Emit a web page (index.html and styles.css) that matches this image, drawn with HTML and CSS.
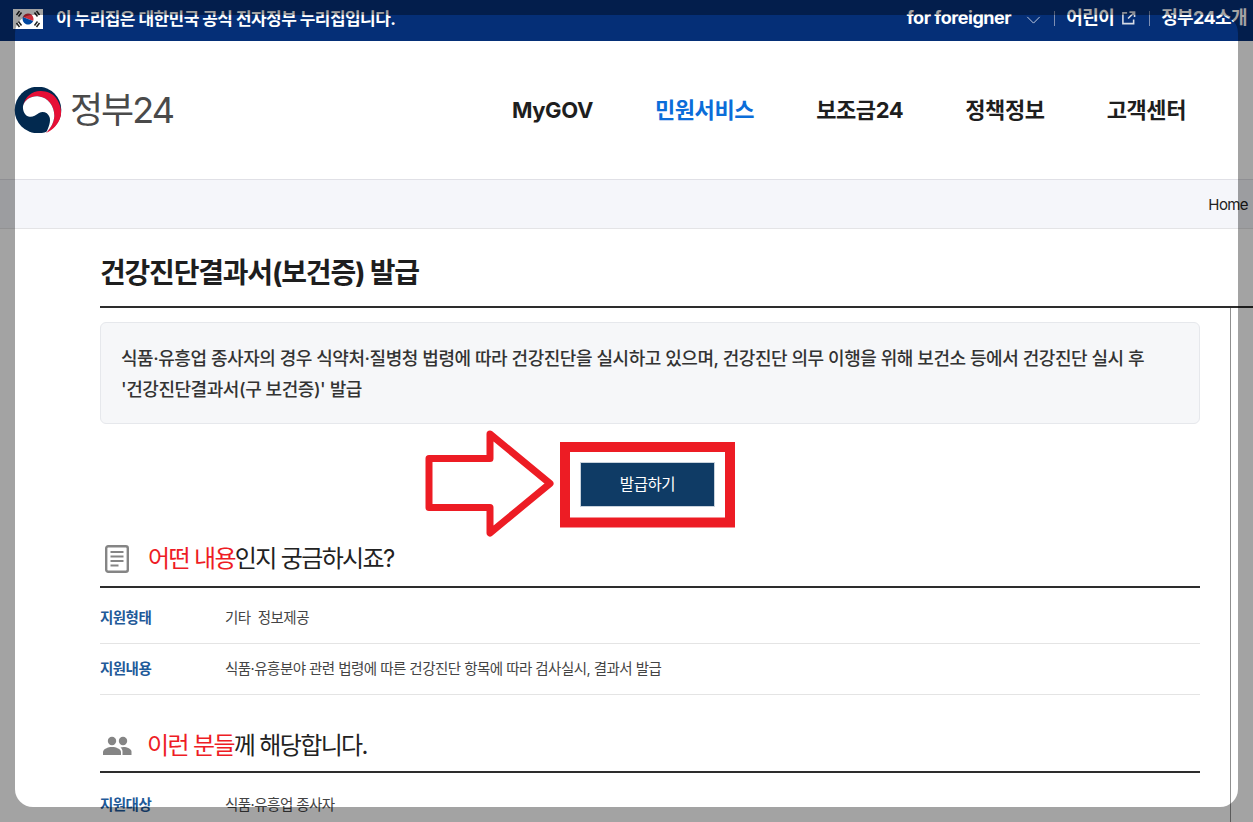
FILE: index.html
```html
<!DOCTYPE html>
<html lang="ko">
<head>
<meta charset="utf-8">
<title>건강진단결과서(보건증) 발급</title>
<link rel="stylesheet" href="styles.css">
</head>
<body>
<div class="page">
  <div class="topbar">
    <div class="gov-note">
      <svg class="flag" viewBox="0 0 30 20" width="30" height="20" aria-hidden="true">
        <rect width="30" height="20" fill="#fff"/>
        <g transform="rotate(20 15 10)">
          <path d="M9.500 10a5.500 5.500 0 0 1 11 0z" fill="#cd2e3a"/>
          <path d="M9.500 10a5.500 5.500 0 0 0 11 0z" fill="#0047a0"/>
        </g>
        <g stroke="#222" stroke-width="1.500">
          <path d="M3.500 6l3-4M5.500 7.500l3-4M21.500 3.500l3 4M23.500 2l3 4M3.500 14l3 4M5.500 12.500l3 4M21.500 16.500l3-4M23.500 18l3-4"/>
        </g>
      </svg>
      <span>이 누리집은 대한민국 공식 전자정부 누리집입니다.</span>
    </div>
    <div class="util">
      <span class="foreigner">for foreigner</span>
      <svg class="chev" viewBox="0 0 16 9" width="15" height="8" aria-hidden="true"><path d="M1 1l7 7 7-7" fill="none" stroke="#d5dcea" stroke-width="1"/></svg>
      <i class="sep"></i>
      <span>어린이</span>
      <svg class="ext" viewBox="0 0 15 15" width="15" height="14" aria-hidden="true"><path d="M6 2H1.500v11.500H13V9M8.500 1.200H14v5.300M14 1.200L7 8" fill="none" stroke="#d6dbe6" stroke-width="1.700"/></svg>
      <i class="sep"></i>
      <span>정부24소개</span>
    </div>
  </div>

  <header class="header">
    <a class="logo">
      <svg viewBox="0 0 48 46" width="48" height="46" aria-hidden="true">
        <circle cx="24" cy="23" r="23.300" fill="#02294f"/>
        <path d="M9 19C11 9 19 3.500 27 4C33 4.500 38 6 42 11C47 18 48 25 46.500 30C44.500 37 39 43 32 46C37 41 40 35 40.300 29C40.500 19 34 10.500 25 9.500C18 8.500 11 12 9 19z" fill="#e60f36"/>
        <path d="M9 19C11 12 18 8.500 25 9.500C34 10.500 40.500 19 40.300 29C40 35 37 41 32 46C35 40 37 34 35.500 30C34 25.500 29 23.500 25 26C21 29 18 30.500 14.500 29.500C11 28.500 8.500 24 9 19z" fill="#fff"/>
      </svg>
      <span class="logo-text">정부24</span>
    </a>
    <nav class="nav">
      <a>MyGOV</a>
      <a class="active">민원서비스</a>
      <a>보조금24</a>
      <a>정책정보</a>
      <a>고객센터</a>
    </nav>
  </header>

  <div class="crumb"><span>Home</span></div>

  <div class="title-block"><h1>건강진단결과서(보건증) 발급</h1></div>

  <main class="body">
    <div class="column">
      <div class="notice">식품·유흥업 종사자의 경우 식약처·질병청 법령에 따라 건강진단을 실시하고 있으며, 건강진단 의무 이행을 위해 보건소 등에서 건강진단 실시 후<br>'건강진단결과서(구 보건증)' 발급</div>

      <div class="action">
        <a class="btn">발급하기</a>
        <svg class="annot" viewBox="0 0 320 115" width="320" height="115" aria-hidden="true">
          <path d="M9 34.500H70V10L130 59.500 70 109V83.500H9z" fill="none" stroke="#ed1c24" stroke-width="7" stroke-linejoin="round"/>
          <rect x="145" y="23" width="165" height="75.500" fill="none" stroke="#ed1c24" stroke-width="10"/>
        </svg>
      </div>

      <section class="sec sec-first">
        <h2>
          <svg class="sec-ico" viewBox="0 0 24 28" width="24" height="28" aria-hidden="true">
            <rect x="1.200" y="1.200" width="21.600" height="25.600" rx="2" fill="none" stroke="#858585" stroke-width="2.400"/>
            <path d="M5.500 7h13M5.500 11.500h13M5.500 16h13M5.500 20.500h8" stroke="#858585" stroke-width="1.800"/>
          </svg>
          <span><em>어떤 내용</em>인지 궁금하시죠?</span>
        </h2>
        <dl class="row"><dt>지원형태</dt><dd>기타&nbsp; 정보제공</dd></dl>
        <dl class="row"><dt>지원내용</dt><dd>식품·유흥분야 관련 법령에 따른 건강진단 항목에 따라 검사실시, 결과서 발급</dd></dl>
      </section>

      <section class="sec sec-second">
        <h2>
          <svg class="sec-ico" viewBox="0 0 30 20" width="30" height="20" aria-hidden="true">
            <circle cx="10" cy="5" r="4.200" fill="#858585"/>
            <circle cx="21" cy="5" r="4.200" fill="#858585"/>
            <path d="M1 19v-3c0-3 5-5 9-5s9 2 9 5v3z" fill="#858585"/>
            <path d="M20.500 19v-3.500c0-1.700-.8-3-2-4 1-.3 2-.5 3-.5 3.500 0 8 1.800 8 4.500V19z" fill="#858585"/>
          </svg>
          <span><em>이런 분들</em>께 해당합니다.</span>
        </h2>
        <dl class="row"><dt>지원대상</dt><dd>식품·유흥업 종사자</dd></dl>
      </section>
    </div>
  </main>

  <div class="dim" aria-hidden="true"></div>
</div>
</body>
</html>
```

FILE: styles.css
```css
* { box-sizing: border-box; }
html, body { margin: 0; padding: 0; }
body {
  font-family: Inter, "Noto Sans CJK KR", "Noto Sans", sans-serif;
  color: #1e1e1e;
  background: #fff;
}
.page {
  position: relative;
  width: 1253px;
  height: 822px;
  overflow: hidden;
}

/* top bar */
.topbar {
  height: 41px;
  background: #052f77;
  color: #fff;
  display: flex;
  justify-content: space-between;
  padding: 0 6px 0 13px;
  font-weight: 700;
}
.gov-note {
  display: flex;
  align-items: flex-start;
  gap: 13px;
  padding-top: 9px;
  font-size: 17px;
  letter-spacing: -0.55px;
  line-height: 20px;
}
.flag { flex: none; }
.util {
  display: flex;
  align-items: flex-start;
  padding-top: 7px;
  font-size: 18px;
  letter-spacing: -0.6px;
  line-height: 22px;
}
.foreigner { letter-spacing: -0.45px; }
.chev { margin: 9px 0 0 15px; }
.ext { margin: 4px 0 0 7px; }
.sep {
  width: 1px;
  height: 15px;
  margin: 4px 11px 0 13px;
  background: #7e8fb3;
}

/* header */
.header {
  height: 138px;
  display: flex;
  justify-content: space-between;
  align-items: center;
  padding: 0 67px 0 14px;
}
.logo { display: flex; align-items: center; gap: 8px; }
.logo-text {
  font-size: 36px;
  font-weight: 400;
  color: #4a4a4a;
  letter-spacing: -2px;
  line-height: 45px;
}
.nav {
  display: flex;
  gap: 62px;
  font-size: 22px;
  font-weight: 700;
  letter-spacing: -0.4px;
  color: #1e1e1e;
  line-height: 30px;
}
.nav .active { color: #0b6dd9; }

/* breadcrumb */
.crumb {
  height: 50px;
  background: #f5f6fa;
  border-top: 1px solid #e0e0e6;
  border-bottom: 1px solid #e4e4e6;
  display: flex;
  justify-content: flex-end;
  align-items: center;
  padding: 0 5px 0 0;
  font-size: 15px;
  letter-spacing: -0.6px;
  color: #222;
}

/* page title */
.title-block {
  height: 79px;
  margin-left: 100px;
  border-bottom: 2px solid #2d2d2d;
}
h1 {
  margin: 0;
  padding-top: 23px;
  font-size: 28px;
  line-height: 42px;
  font-weight: 700;
  letter-spacing: -1.2px;
}

/* body */
.body {
  width: 1231px;
  padding-left: 100px;
  border-right: 1px solid #8f8f8f;
  height: 520px;
}
.column { width: 1100px; padding-top: 14px; }
.notice {
  height: 102px;
  padding: 20px 20px 0;
  background: #f6f7f9;
  border: 1px solid #e6e8ec;
  border-radius: 6px;
  font-size: 18px;
  line-height: 31px;
  font-weight: 500;
  letter-spacing: -0.45px;
  color: #333;
}
.action {
  position: relative;
  height: 121px;
  padding: 38px 0 0 480px;
}
.btn {
  display: block;
  width: 135px;
  height: 45px;
  background: #0f3b65;
  border: 1px solid #c8d2dc;
  color: #fff;
  font-size: 15.500px;
  line-height: 43px;
  text-align: center;
  letter-spacing: -0.4px;
}
.annot {
  position: absolute;
  left: 320px;
  top: 0;
}

/* sections */
.sec h2 {
  margin: 0;
  height: 43px;
  padding-bottom: 13px;
  display: flex;
  align-items: center;
  font-size: 24px;
  font-weight: 400;
  letter-spacing: -1.65px;
  color: #222;
  border-bottom: 2px solid #2d2d2d;
  line-height: 36px;
}
.sec h2 em { font-style: normal; color: #ee1c25; }
.sec-first h2 { padding-left: 5px; gap: 19px; }
.sec-second h2 { padding: 0 0 9px 2px; gap: 15px; margin-top: 35px; }
.sec-ico { flex: none; }
.row {
  margin: 0;
  height: 51px;
  padding-bottom: 4px;
  display: flex;
  align-items: center;
  border-bottom: 1px solid #e4e4e4;
  font-size: 14.500px;
  letter-spacing: -0.53px;
}
.sec-first .row:first-of-type { height: 56px; padding: 2px 0 0; }
.sec-second .row { height: 60px; border: 0; padding-bottom: 0; }
dt { width: 125px; font-weight: 700; color: #1f5a99; }
dd { margin: 0; color: #444; }

/* dim layer: transparent rounded window, everything around it darkened */
.dim {
  position: absolute;
  left: 15px;
  top: 15px;
  width: 1223px;
  height: 792px;
  border-radius: 18px;
  box-shadow: 0 0 0 1500px rgba(0, 0, 0, 0.36);
  pointer-events: none;
}
```
